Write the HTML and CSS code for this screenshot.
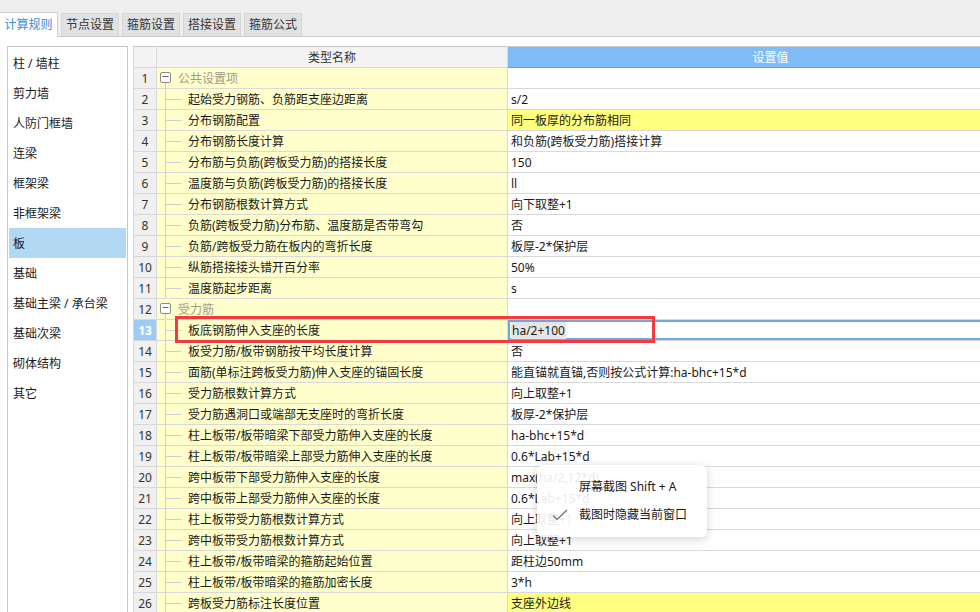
FILE: index.html
```html
<!DOCTYPE html>
<html lang="zh-CN">
<head>
<meta charset="utf-8">
<title>计算规则</title>
<link rel="stylesheet" href="styles.css">
</head>
<body>
<div class="tabbar">
  <div class="tab active">计算规则</div>
  <div class="tab">节点设置</div>
  <div class="tab">箍筋设置</div>
  <div class="tab">搭接设置</div>
  <div class="tab">箍筋公式</div>
</div>
<div class="main">
  <ul class="side">
    <li>柱 / 墙柱</li>
    <li>剪力墙</li>
    <li>人防门框墙</li>
    <li>连梁</li>
    <li>框架梁</li>
    <li>非框架梁</li>
    <li class="sel">板</li>
    <li>基础</li>
    <li>基础主梁 / 承台梁</li>
    <li>基础次梁</li>
    <li>砌体结构</li>
    <li>其它</li>
  </ul>
  <div class="gridwrap">
    <table class="grid">
      <colgroup><col class="c-no"><col class="c-name"><col class="c-val"></colgroup>
      <thead>
        <tr><th class="no"></th><th class="hname">类型名称</th><th class="hval">设置值</th></tr>
      </thead>
      <tbody>
        <tr><td class="no">1</td><td class="name grp first"><span class="box">−</span>公共设置项</td><td class="val"></td></tr>
        <tr><td class="no">2</td><td class="name">起始受力钢筋、负筋距支座边距离</td><td class="val">s/2</td></tr>
        <tr><td class="no">3</td><td class="name">分布钢筋配置</td><td class="val hl">同一板厚的分布筋相同</td></tr>
        <tr><td class="no">4</td><td class="name">分布钢筋长度计算</td><td class="val">和负筋(跨板受力筋)搭接计算</td></tr>
        <tr><td class="no">5</td><td class="name">分布筋与负筋(跨板受力筋)的搭接长度</td><td class="val">150</td></tr>
        <tr><td class="no">6</td><td class="name">温度筋与负筋(跨板受力筋)的搭接长度</td><td class="val">ll</td></tr>
        <tr><td class="no">7</td><td class="name">分布钢筋根数计算方式</td><td class="val">向下取整+1</td></tr>
        <tr><td class="no">8</td><td class="name">负筋(跨板受力筋)分布筋、温度筋是否带弯勾</td><td class="val">否</td></tr>
        <tr><td class="no">9</td><td class="name">负筋/跨板受力筋在板内的弯折长度</td><td class="val">板厚-2*保护层</td></tr>
        <tr><td class="no">10</td><td class="name">纵筋搭接接头错开百分率</td><td class="val">50%</td></tr>
        <tr><td class="no">11</td><td class="name">温度筋起步距离</td><td class="val">s</td></tr>
        <tr><td class="no">12</td><td class="name grp"><span class="box">−</span>受力筋</td><td class="val"></td></tr>
        <tr><td class="no cur">13</td><td class="name">板底钢筋伸入支座的长度</td><td class="val edit"><span class="selt">ha/2+100</span></td></tr>
        <tr><td class="no">14</td><td class="name">板受力筋/板带钢筋按平均长度计算</td><td class="val">否</td></tr>
        <tr><td class="no">15</td><td class="name">面筋(单标注跨板受力筋)伸入支座的锚固长度</td><td class="val">能直锚就直锚,否则按公式计算:ha-bhc+15*d</td></tr>
        <tr><td class="no">16</td><td class="name">受力筋根数计算方式</td><td class="val">向上取整+1</td></tr>
        <tr><td class="no">17</td><td class="name">受力筋遇洞口或端部无支座时的弯折长度</td><td class="val">板厚-2*保护层</td></tr>
        <tr><td class="no">18</td><td class="name">柱上板带/板带暗梁下部受力筋伸入支座的长度</td><td class="val">ha-bhc+15*d</td></tr>
        <tr><td class="no">19</td><td class="name">柱上板带/板带暗梁上部受力筋伸入支座的长度</td><td class="val">0.6*Lab+15*d</td></tr>
        <tr><td class="no">20</td><td class="name">跨中板带下部受力筋伸入支座的长度</td><td class="val">max(ha/2,12*d)</td></tr>
        <tr><td class="no">21</td><td class="name">跨中板带上部受力筋伸入支座的长度</td><td class="val">0.6*Lab+15*d</td></tr>
        <tr><td class="no">22</td><td class="name">柱上板带受力筋根数计算方式</td><td class="val">向上取整+1</td></tr>
        <tr><td class="no">23</td><td class="name">跨中板带受力筋根数计算方式</td><td class="val">向上取整+1</td></tr>
        <tr><td class="no">24</td><td class="name">柱上板带/板带暗梁的箍筋起始位置</td><td class="val">距柱边50mm</td></tr>
        <tr><td class="no">25</td><td class="name">柱上板带/板带暗梁的箍筋加密长度</td><td class="val">3*h</td></tr>
        <tr><td class="no">26</td><td class="name">跨板受力筋标注长度位置</td><td class="val hl">支座外边线</td></tr>
      </tbody>
    </table>
  </div>
</div>
<div class="redmark"></div>
<div class="menu">
  <div class="mi">屏幕截图 Shift + A</div>
  <div class="mi"><svg class="chk" width="16" height="12" viewBox="0 0 16 12"><path d="M1 6.5 L5 10.5 L15 1" fill="none" stroke="#666" stroke-width="1.1"/></svg>截图时隐藏当前窗口</div>
</div>
</body>
</html>
```

FILE: styles.css
```css
* { box-sizing: border-box; }
html, body { margin: 0; padding: 0; }
body {
  width: 980px;
  height: 612px;
  overflow: hidden;
  background: #fff;
  font-family: "Noto Sans", "Noto Sans CJK SC", sans-serif;
  font-size: 12px;
  color: #1a1a1a;
  position: relative;
}
.tabbar {
  height: 37px;
  background: #eeeeee;
  border-bottom: 1px solid #c9ccd3;
  display: flex;
  align-items: flex-end;
  gap: 3px;
}
.tab {
  width: 58px;
  height: 23px;
  line-height: 22px;
  text-align: center;
  background: #e1e1e1;
  border: 1px solid #d6d6d6;
  border-bottom: none;
  color: #333;
  font-size: 12px;
}
.tab.active {
  height: 25px;
  line-height: 24px;
  background: #fff;
  color: #3a8ad8;
  border-color: #d0d0d0;
  border-left: none;
  margin-bottom: -1px;
}
.main {
  display: flex;
  align-items: flex-start;
  padding: 9px 0 0 7px;
  gap: 5px;
  height: 575px;
  overflow: hidden;
}
.side {
  list-style: none;
  margin: 0;
  padding: 1px;
  width: 121px;
  height: 580px;
  border: 1px solid #c8c8c8;
  flex: none;
}
.side li {
  height: 30px;
  line-height: 31px;
  padding-left: 4px;
  color: #1a1a1a;
}
.side li.sel { background: #b3d8f4; }
.gridwrap {
  flex: 1;
  min-width: 0;
  overflow: hidden;
}
.grid {
  border-collapse: collapse;
  table-layout: fixed;
  width: 900px;
  border: 1px solid #c8c8c8;
}
.c-no { width: 23px; }
.c-name { width: 351px; }
.c-val { width: 526px; }
.grid th, .grid td {
  height: 21px;
  padding: 0;
  line-height: 19px;
  border: 1px solid #d9d9d9;
  white-space: nowrap;
  overflow: hidden;
  font-weight: normal;
}
.grid thead th {
  background: #f3f3f3;
  color: #333;
  border-top: 1px solid #c8c8c8;
}
.grid thead th.hval {
  background: #80bcf7;
  color: #fff;
  border-bottom: 1px solid #5f9fe0;
  border-left-color: #5f9fe0;
}
.grid td.no {
  background: #f0f0f0;
  text-align: center;
  color: #333;
}
.grid td.no.cur {
  background: #9ccbf6;
  color: #fff;
  font-weight: bold;
}
.grid td.name {
  background:
    linear-gradient(#cfcfcf, #cfcfcf) 8px 0 / 1px 100% no-repeat,
    linear-gradient(#cfcfcf, #cfcfcf) 9px 50% / 15px 1px no-repeat,
    #ffffcc;
  padding-left: 31px;
}
.grid td.name.grp {
  background:
    linear-gradient(#cfcfcf, #cfcfcf) 8px 15px / 1px 100% no-repeat,
    #ffffcc;
  padding-left: 21px;
  color: #a09c8c;
  position: relative;
}
.box {
  position: absolute;
  left: 3px;
  top: 4px;
  width: 11px;
  height: 11px;
  border: 1px solid #8a8a8a;
  border-radius: 2px;
  background: #fff;
  color: #555;
  font-size: 10px;
  line-height: 8px;
  text-align: center;
  font-family: "DejaVu Sans", sans-serif;
}
.grid td.val { padding-left: 3px; background: #fff; }
.grid td.val.hl { background: #ffff80; }
.grid td.val.edit { box-shadow: inset 0 0 0 2px #6ea6e0; }
.selt { background: #e6e6e6; padding: 0 1px; }
.redmark {
  position: absolute;
  left: 175px;
  top: 316px;
  width: 480px;
  height: 27px;
  border: 3px solid #f23b3f;
}
.menu {
  position: absolute;
  left: 537px;
  top: 465px;
  width: 170px;
  height: 72px;
  background: rgba(255, 255, 255, 0.9);
  border-radius: 6px;
  box-shadow: 0 2px 10px rgba(0, 0, 0, 0.18);
  padding-top: 8px;
  color: #1a1a1a;
}
.mi {
  height: 28px;
  line-height: 28px;
  padding-left: 42px;
  position: relative;
}
.chk { position: absolute; left: 15px; top: 8px; }
```
